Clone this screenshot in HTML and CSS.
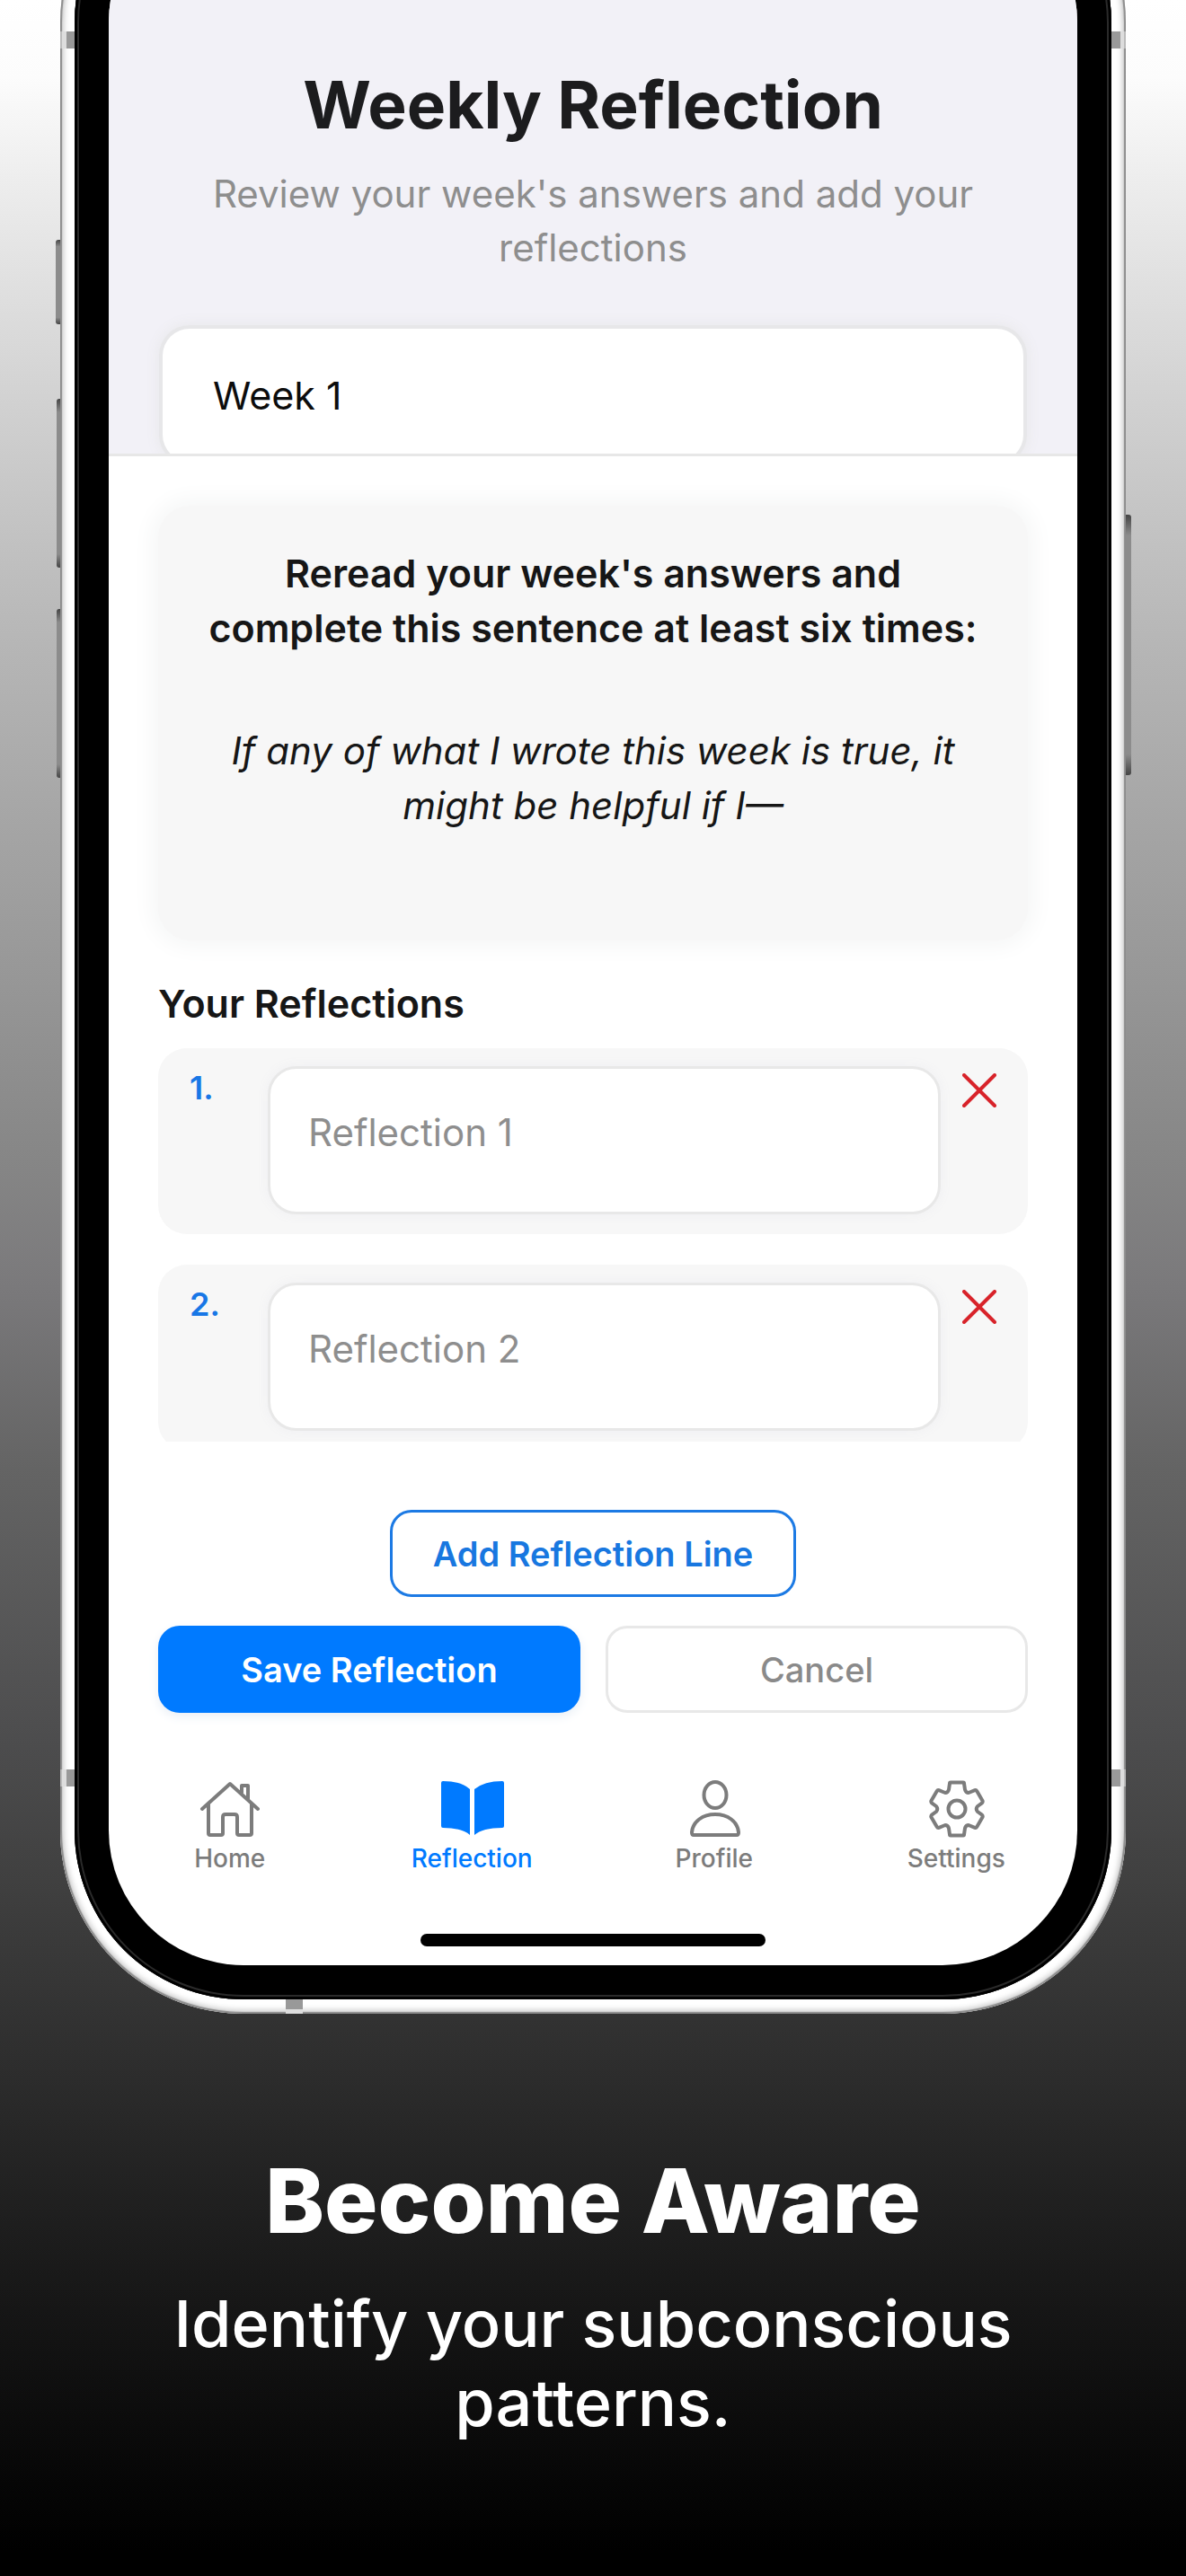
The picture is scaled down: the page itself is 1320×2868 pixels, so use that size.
FILE: index.html
```html
<!DOCTYPE html>
<html lang="en">
<head>
<meta charset="utf-8">
<meta name="viewport" content="width=device-width, initial-scale=1">
<title>Weekly Reflection</title>
<link rel="stylesheet" href="styles.css">
</head>
<body>
<main class="poster">
  <div class="phone">
    <span class="side-key key-action"></span>
    <span class="side-key key-up"></span>
    <span class="side-key key-down"></span>
    <span class="side-key key-power"></span>
    <span class="band band-left band-high"></span>
    <span class="band band-right band-high"></span>
    <span class="band band-left band-low"></span>
    <span class="band band-right band-low"></span>
    <span class="band-bottom"></span>
    <div class="bezel">
      <div class="screen">
        <header class="intro">
          <h1 class="title">Weekly Reflection</h1>
          <p class="subtitle">Review your week's answers and add your reflections</p>
          <select class="week" aria-label="Week"><option>Week 1</option></select>
        </header>
        <section class="sheet">
          <div class="prompt">
            <p class="prompt-lead">Reread your week's answers and complete this sentence at least six times:</p>
            <p class="prompt-stem">If any of what I wrote this week is true, it might be helpful if I—</p>
          </div>
          <h2 class="section-title">Your Reflections</h2>
          <div class="lines">
            <div class="line">
              <label class="line-number" for="reflection-1">1.</label>
              <textarea class="line-field" id="reflection-1" placeholder="Reflection 1"></textarea>
              <button class="line-remove" type="button" aria-label="Remove line 1">
                <svg width="38" height="38" viewBox="0 0 38 38"><path d="M2 2 36 36M36 2 2 36"/></svg>
              </button>
            </div>
            <div class="line">
              <label class="line-number" for="reflection-2">2.</label>
              <textarea class="line-field" id="reflection-2" placeholder="Reflection 2"></textarea>
              <button class="line-remove" type="button" aria-label="Remove line 2">
                <svg width="38" height="38" viewBox="0 0 38 38"><path d="M2 2 36 36M36 2 2 36"/></svg>
              </button>
            </div>
          </div>
          <button class="button button-add" type="button">Add Reflection Line</button>
          <div class="actions">
            <button class="button button-save" type="button">Save Reflection</button>
            <button class="button button-cancel" type="button">Cancel</button>
          </div>
        </section>
        <nav class="tabs">
          <a class="tab" href="#home">
            <svg class="tab-icon" viewBox="0 0 72 64"><path d="M5 32 36 4 67 32M12 27V59Q12 61 14 61H26Q28 61 28 59V41Q28 38 31 38H41Q44 38 44 41V59Q44 61 46 61H58Q60 61 60 59V27M49 14V6H56V21"/></svg>
            Home
          </a>
          <a class="tab tab-current" href="#reflection">
            <svg class="tab-icon" viewBox="0 0 72 64"><path class="solid" d="M4 1Q24 1 34 10V61Q26 53 4 53Q2 53 2 51V3Q2 1 4 1ZM70 1Q50 1 39 10V61Q48 53 70 53Q72 53 72 51V3Q72 1 70 1Z"/></svg>
            Reflection
          </a>
          <a class="tab" href="#profile">
            <svg class="tab-icon" viewBox="0 0 72 64"><ellipse cx="37" cy="16.5" rx="12.5" ry="14.5"/><path d="M13 61Q11 61 11 58C12 46 23 38 37 38S62 46 63 58Q63 61 61 61Z"/></svg>
            Profile
          </a>
          <a class="tab" href="#settings">
            <svg class="tab-icon" viewBox="-37 -32 72 64"><circle r="9.5"/><path d="M-7 -29.4H7Q8 -29.4 8 -28.4L9 -21.5Q10 -18 13 -18L20 -20.8Q21.4 -21.3 22.2 -20L28.6 -9Q29 -7.6 28 -6.6L23 -3Q20.5 0 23 3L28 6.6Q29 7.6 28.6 9L22.2 20Q21.4 21.3 20 20.8L13 18Q10 18 9 21.5L8 28.4Q8 29.4 7 29.4H-7Q-8 29.4 -8 28.4L-9 21.5Q-10 18 -13 18L-20 20.8Q-21.4 21.3 -22.2 20L-28.6 9Q-29 7.6 -28 6.6L-23 3Q-20.5 0 -23 -3L-28 -6.6Q-29 -7.6 -28.6 -9L-22.2 -20Q-21.4 -21.3 -20 -20.8L-13 -18Q-10 -18 -9 -21.5L-8 -28.4Q-8 -29.4 -7 -29.4Z"/></svg>
            Settings
          </a>
        </nav>
        <div class="home-bar"></div>
      </div>
    </div>
  </div>
  <section class="caption">
    <h2 class="caption-title">Become Aware</h2>
    <p class="caption-text">Identify your subconscious patterns.</p>
  </section>
</main>
</body>
</html>
```

FILE: styles.css
```css
* {
  box-sizing: border-box;
  margin: 0;
}

body {
  font-family: Inter, "Liberation Sans", sans-serif;
  background: #000;
}

.poster {
  min-height: 100vh;
  overflow: hidden;
  background: linear-gradient(#fff 0%, #fcfcfc 3%, #ededed 7%, #d0d0d0 16%, #b6b6b6 25%, #9e9e9e 35%, #868686 45%, #7a797b 50%, #646464 57%, #4e4e4f 67%, #404040 73%, #262626 83%, #0e0e0e 93%, #000 99%);
}

/* Device: metal frame, black bezel, screen. The top runs off the page. */
.phone {
  position: relative;
  width: calc(100% - 134px);
  margin: -179px auto 0;
  padding: 16px;
  border-radius: 204px;
  background: #fff;
  box-shadow: inset 0 0 1px 2px #8c8c8c, inset 0 0 6px 4px #c8c8c8;
}

.bezel {
  padding: 38px;
  border-radius: 188px;
  background: #000;
  box-shadow: inset 0 0 0 3px #000, inset 0 0 0 5px #2a2a2a;
}

.screen {
  overflow: hidden;
  border-radius: 150px;
  background: #fff;
}

.side-key {
  position: absolute;
  left: -4px;
  width: 4px;
  border-radius: 3px 0 0 3px;
  background: linear-gradient(#444, #8c8c8c 8%, #8c8c8c 92%, #444);
}

.key-action {
  top: 446px;
  left: -5px;
  width: 5px;
  height: 94px;
}

.key-up {
  top: 623px;
  height: 188px;
}

.key-down {
  top: 857px;
  height: 188px;
}

.key-power {
  top: 752px;
  left: 100%;
  width: 6px;
  height: 290px;
  border-radius: 0 3px 3px 0;
}

.band {
  position: absolute;
  width: 16px;
  height: 19px;
}

.band-left {
  left: 0;
  background: linear-gradient(90deg, #bbb 0 2px, #ddd 2px 7px, #999 7px);
}

.band-right {
  right: 0;
  background: linear-gradient(270deg, #bbb 0 2px, #ddd 2px 6px, #999 6px);
}

.band-high {
  top: 214px;
}

.band-low {
  bottom: 253px;
}

.band-bottom {
  position: absolute;
  bottom: 0;
  left: 251px;
  width: 19px;
  height: 16px;
  background: linear-gradient(0deg, #ddd 0 5px, #999 5px);
}

/* Screen header */
.intro {
  display: flex;
  flex-direction: column;
  padding: 196px 60px 0;
  background: #f2f1f7;
  text-align: center;
}

.title {
  font-size: 73px;
  line-height: 92px;
  font-weight: 700;
  color: #1c1c1e;
}

.subtitle {
  margin-top: 23px;
  padding: 0 48px;
  font-size: 42px;
  line-height: 60px;
  color: #8e8e8e;
}

.week {
  appearance: none;
  height: 148px;
  margin: 60px 0 -9px;
  padding: 0 56px;
  border: 0;
  border-radius: 30px;
  background: #fff;
  box-shadow: 0 0 0 4px #e7e7e9, 0 0 16px 4px #e7e7e9;
  font: 400 43px Inter, "Liberation Sans", sans-serif;
  color: #0c0c0c;
}

/* Sheet */
.sheet {
  position: relative;
  display: flex;
  flex-direction: column;
  padding: 55px 55px 0;
  border-top: 3px solid #e7e7e7;
  background: #fff;
}

.prompt {
  padding: 45px 50px 120px;
  border-radius: 36px;
  background: #f7f7f7;
  box-shadow: 0 0 24px 8px #f6f7f7;
  font-size: 42px;
  line-height: 61px;
  text-align: center;
  color: #161616;
}

.prompt-lead {
  font-size: 43px;
  font-weight: 600;
}

.prompt-stem {
  margin-top: 75px;
  font-style: italic;
}

.section-title {
  margin-top: 44px;
  font-size: 43px;
  line-height: 52px;
  font-weight: 600;
  color: #161616;
}

.lines {
  display: flex;
  flex-direction: column;
  gap: 34px;
  max-height: 438px;
  margin-top: 24px;
  overflow: hidden;
}

.line {
  display: grid;
  flex: none;
  grid-template-columns: 87px 1fr 62px;
  align-items: start;
  padding: 20px 35px 22px;
  border-radius: 32px;
  background: #f7f7f7;
}

.line-number {
  padding-top: 2px;
  font-size: 36px;
  line-height: 44px;
  font-weight: 600;
  color: #1877e6;
}

.line-field {
  display: block;
  width: 100%;
  height: 165px;
  padding: 46px 42px;
  resize: none;
  border: 3px solid #e8e8e8;
  border-radius: 32px;
  background: #fff;
  box-shadow: 0 0 12px 2px #f1f1f3;
  font: 400 42px/50px Inter, "Liberation Sans", sans-serif;
}

.line-field::placeholder {
  color: #8e8e8e;
}

.line-remove {
  display: flex;
  align-items: center;
  justify-content: flex-end;
  height: 54px;
  padding: 0;
  border: 0;
  background: none;
}

.line-remove svg {
  fill: none;
  stroke: #d8232a;
  stroke-width: 4;
  stroke-linecap: round;
}

.button {
  height: 97px;
  border: 3px solid #e8e8e8;
  border-radius: 24px;
  background: #fff;
  font: 600 38px Inter, "Liberation Sans", sans-serif;
}

.button-add {
  align-self: center;
  margin-top: 76px;
  padding: 0 45px;
  border-color: #1c7ae4;
  color: #1877e0;
}

.actions {
  display: grid;
  grid-template-columns: 1fr 1fr;
  gap: 28px;
  margin-top: 32px;
}

.button-save {
  border: 0;
  background: #007aff;
  box-shadow: 0 4px 12px #e9eff6;
  color: #fff;
}

.button-cancel {
  font-weight: 500;
  color: #8a8a8a;
}

/* Tab bar */
.tabs {
  display: grid;
  grid-template-columns: repeat(4, 1fr);
  margin-top: 75px;
}

.tab {
  display: flex;
  flex-direction: column;
  align-items: center;
  gap: 7px;
  font-size: 28px;
  line-height: 32px;
  font-weight: 500;
  text-decoration: none;
  color: #7c7c7c;
}

.tab-icon {
  width: 72px;
  height: 64px;
  overflow: visible;
  fill: none;
  stroke: currentColor;
  stroke-width: 4;
  stroke-linecap: round;
  stroke-linejoin: round;
}

.tab-current {
  color: #007aff;
}

.tab-icon .solid {
  fill: currentColor;
  stroke: none;
}

.home-bar {
  width: 384px;
  height: 14px;
  margin: 68px auto 21px;
  border-radius: 7px;
  background: #000;
}

/* Caption under the device */
.caption {
  padding: 148px 160px 149px;
  text-align: center;
  color: #fff;
}

.caption-title {
  font-size: 99px;
  line-height: 120px;
  font-weight: 800;
}

.caption-text {
  margin-top: 33px;
  font-size: 72px;
  line-height: 88px;
  font-weight: 500;
}
```
